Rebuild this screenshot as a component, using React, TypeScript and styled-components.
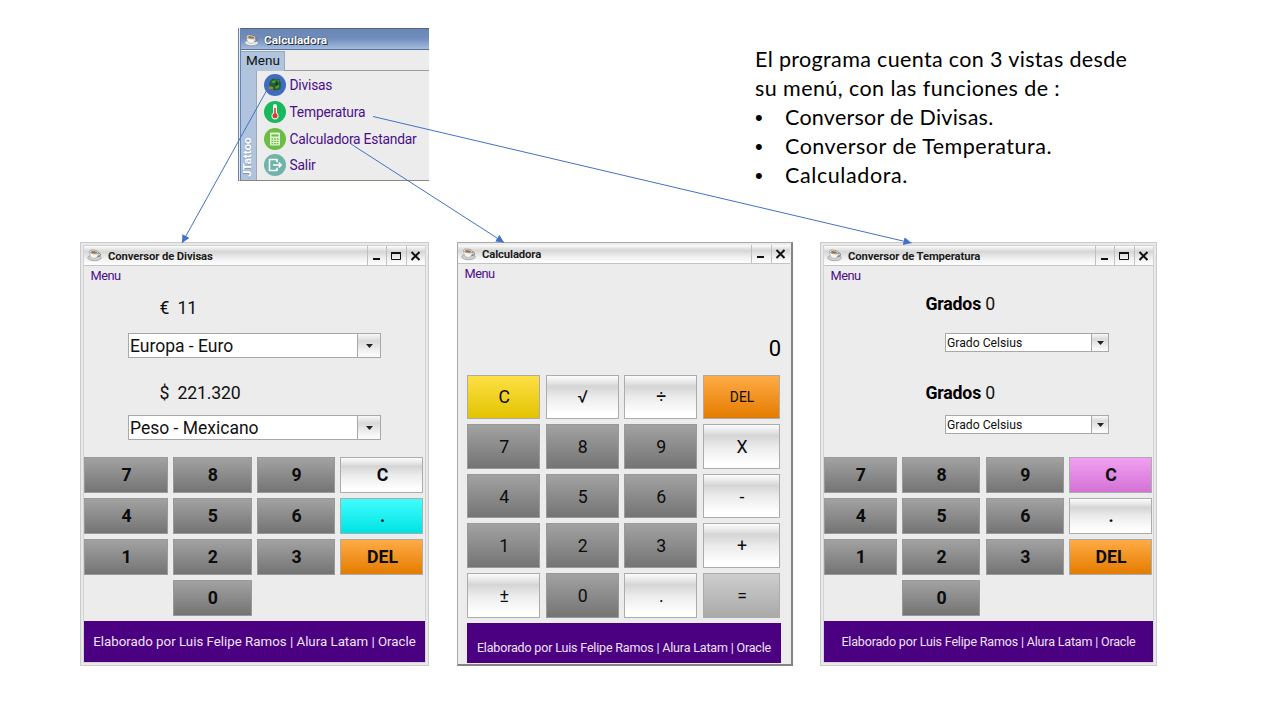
import React from 'react';
import styled, { createGlobalStyle, css } from 'styled-components';

const Global = createGlobalStyle`
  body { margin: 0; background: #fff; }
  * { box-sizing: border-box; }
`;

const Slide = styled.main`
  position: relative;
  width: 1280px;
  height: 720px;
  overflow: hidden;
  background: #fff;
  color: #111;
  font-family: Roboto, "Liberation Sans", sans-serif;
  white-space: nowrap;
`;

const TopRow = styled.section`
  display: flex;
  align-items: flex-start;
  height: 242px;
  padding: 28px 0 0 238px;
`;

const MenuShot = styled.div`
  width: 191px;
  height: 153px;
  background: #ececec;
  border-left: 3px double #6784b2;
  border-bottom: 1px solid #8a8a78;
  overflow: hidden;
`;

const BlueTitle = styled.header`
  display: flex;
  align-items: center;
  gap: 5px;
  height: 22px;
  margin-left: -3px;
  padding: 2px 0 0 6px;
  border-top: 1px solid #4d6185;
  border-bottom: 1px solid #5b7199;
  background: linear-gradient(#6b86b3, #6f8cbc 45%, #a3bbdd);
  color: #fff;
  font-size: 11.8px;
  font-weight: 700;
  text-shadow: 1px 1px 0 #222c40, 0 0 1px #222c40;
`;

const MenuBar = styled.div`
  height: 21px;
  padding-top: 1px;
  border-bottom: 1px solid #9d9d9d;
`;

const MenuTab = styled.div`
  width: 44px;
  height: 20px;
  padding-left: 5px;
  border-right: 1px solid #9aa9bd;
  border-top: 1px solid #9aa9bd;
  background: #b0c4de;
  font-size: 13.5px;
  line-height: 17px;
`;

const MenuBody = styled.div`
  display: flex;
  height: 109px;
`;

const Brand = styled.div`
  width: 16px;
  height: 109px;
  flex: none;
  padding-top: 3px;
  border-left: 1px solid #9aa9bd;
  background: #b0c4de;
  color: #fff;
  font-size: 11.5px;
  font-weight: 700;
  line-height: 13px;
  writing-mode: vertical-rl;
  transform: rotate(180deg);
  text-shadow: -1px 0 1px #8295b2;
`;

const MenuList = styled.ul`
  margin: 0;
  padding: 1px 0 0 6.5px;
  list-style: none;
`;

const MenuItem = styled.li`
  display: flex;
  align-items: center;
  gap: 4px;
  height: 26.7px;
  color: #4b0f8b;
  font-size: 13.8px;
  letter-spacing: -0.2px;
`;

const Notes = styled.div`
  margin: 17px 0 0 326px;
  color: #000;
  font-family: Lato, "Liberation Sans", sans-serif;
  font-size: 21.5px;
  line-height: 29px;
`;

const NoteLine = styled.div<{ $track?: number }>`
  height: 29px;
  letter-spacing: ${p => p.$track ?? 0}px;
`;

const Bullet = styled.span`
  display: inline-block;
  width: 30px;
  font-family: "Liberation Sans", sans-serif;
  font-size: 22px;
  letter-spacing: 0;
`;

const WindowRow = styled.section`
  display: flex;
  align-items: flex-start;
  padding-left: 80px;
`;

const Frame = styled.article<{ $w: number; $ml?: number; $sharp?: boolean }>`
  display: flex;
  flex-direction: column;
  width: ${p => p.$w}px;
  height: 424px;
  margin-left: ${p => p.$ml ?? 0}px;
  background: #ececec;
  border: 1px solid #cbcbcb;
  ${p => p.$sharp
    ? css`
        padding: 2px 1px 0 0;
        border-color: #a9a9a9 #848484 #848484 #a9a9a9;
        border-width: 1px 2px 2px 1px;
      `
    : css`
        padding: 3px 3px 3px 3px;
        box-shadow: inset 0 0 0 2px #e9e9e9, inset 0 0 0 3px #d3d3d3;
      `}
`;

const TitleBar = styled.header<{ $h: number }>`
  display: flex;
  flex: none;
  align-items: center;
  height: ${p => p.$h}px;
  padding-left: 3px;
  border-bottom: 1px solid #c4c4c4;
  background: linear-gradient(#fdfdfd 0%, #e4e4e4 18%, #d6d6d6 30%, #efefef 65%, #fff 100%);
`;

const Title = styled.span`
  flex: 1;
  padding: 1px 0 0 6px;
  color: #1c1c1c;
  font-size: 11.3px;
  font-weight: 700;
  letter-spacing: -0.12px;
`;

const WinButton = styled.span`
  display: flex;
  align-items: center;
  justify-content: center;
  width: 19.4px;
  height: 100%;
  border-left: 1px solid #c0c0c0;
`;

const MenuLabel = styled.nav`
  height: 20px;
  padding-left: 6.5px;
  color: #4b0f8b;
  font-size: 12.8px;
  letter-spacing: -0.5px;
  line-height: 20px;
`;

const Converter = styled.div`
  height: 171px;
`;

const Value = styled.div<{ $top: number; $left: number }>`
  height: 22px;
  margin: ${p => p.$top}px 0 0 ${p => p.$left}px;
  font-size: 17.7px;
  letter-spacing: -0.2px;
  line-height: 22px;
  white-space: pre;
  b { color: #000; }
`;

const Select = styled.div<{ $w: number; $h: number; $top: number; $left: number; $size: number }>`
  display: flex;
  width: ${p => p.$w}px;
  height: ${p => p.$h}px;
  margin: ${p => p.$top}px 0 0 ${p => p.$left}px;
  border: 1px solid #a8a8a8;
  background: #fff;
  font-size: ${p => p.$size}px;
  line-height: ${p => p.$h - 2}px;
`;

const SelectText = styled.span`
  flex: 1;
  height: 100%;
  padding: 1px 0 0 1px;
`;

const SelectArrow = styled.span<{ $w: number }>`
  display: flex;
  align-items: center;
  justify-content: center;
  width: ${p => p.$w}px;
  height: 100%;
  border-left: 1px solid #a8a8a8;
  background: linear-gradient(#f8f8f8, #dadada 30%, #fafafa 90%);
`;

const KeyGrid = styled.div<{ $cols: string; $row: number; $gap: number; $n: number }>`
  display: grid;
  grid-template-columns: ${p => p.$cols};
  grid-template-rows: repeat(${p => p.$n}, ${p => p.$row}px);
  row-gap: ${p => p.$gap}px;
  column-gap: 5.3px;
`;

type Tone = 'gray' | 'white' | 'cyan' | 'orange' | 'pink' | 'yellow' | 'silver';

const tones: Record<Tone, string> = {
  gray: 'linear-gradient(#a2a2a2, #747474)',
  white: 'linear-gradient(#fcfcfc 0%, #e6e6e6 15%, #d5d5d5 25%, #ebebeb 50%, #fff 90%)',
  cyan: 'linear-gradient(#41fdfd, #00e3e3)',
  orange: 'linear-gradient(#ffab45, #e47c00)',
  pink: 'linear-gradient(#f1a0f1, #d372d5)',
  yellow: 'linear-gradient(#fee045, #e3c300)',
  silver: 'linear-gradient(#cecece, #a9a9a9)',
};

const Key = styled.button<{ $tone: Tone; $bold?: boolean; $size?: number; $col?: number }>`
  padding: 1px 0 0 1px;
  border: 1px solid ${p => (p.$tone === 'gray' ? '#999' : '#acacac')};
  background: ${p => tones[p.$tone]};
  color: #0c0c0c;
  font-family: inherit;
  font-size: ${p => p.$size ?? 17.7}px;
  font-weight: ${p => (p.$bold ? 700 : 400)};
  ${p => p.$col && css`grid-column: ${p.$col};`}
`;

const Display = styled.div`
  height: 90.6px;
  padding: 54px 9px 0 0;
  color: #000;
  font-size: 22px;
  line-height: 22px;
  text-align: right;
`;

const CalcKeys = styled.div`
  padding: 0 9px;
`;

const Footer = styled.footer<{ $h: number; $size: number; $top: number; $pt?: number; $track?: number }>`
  display: flex;
  flex: none;
  align-items: center;
  justify-content: center;
  height: ${p => p.$h}px;
  margin-top: ${p => p.$top}px;
  padding-top: ${p => p.$pt ?? 0}px;
  background: #4b0082;
  color: #eee4f6;
  font-size: ${p => p.$size}px;
  letter-spacing: ${p => p.$track ?? 0}px;
`;

const Connectors = styled.svg`
  position: absolute;
  inset: 0;
  pointer-events: none;
`;

const Cup = ({ dark }: { dark?: boolean }) => (
  <svg width="15" height="13" viewBox="0 0 15 13">
    <ellipse cx="7.500" cy="8.800" rx="6.800" ry="2.900" fill={dark ? '#e9e9e9' : '#d0d0d0'} stroke="#8a8a8a" strokeWidth=".6" />
    <path d="M2.800 2.800c-.3 3.500 1.200 6.400 4 6.600 2.900.1 4.600-2.500 4.700-5.600z" fill="#f5f5f5" stroke="#999" strokeWidth=".5" />
    <path d="M11 4c3.600-.2 3.200 3.600-.6 3.800" fill="none" stroke="#6b6b6b" strokeWidth=".9" />
    <ellipse cx="7" cy="3" rx="4.500" ry="1.800" transform="rotate(8 7 3)" fill="#eee" stroke="#777" strokeWidth=".6" />
    <ellipse cx="7.200" cy="3.300" rx="3.200" ry="1.100" transform="rotate(8 7 3)" fill="#a4703f" />
  </svg>
);

const Minimize = () => (
  <svg width="12" height="12"><path d="M2 9h7" stroke="#111" strokeWidth="2" /></svg>
);
const Maximize = () => (
  <svg width="12" height="12"><path d="M1.500 2.500h9v7h-9z" fill="none" stroke="#111" /><path d="M1 3h10" stroke="#111" strokeWidth="2" /></svg>
);
const Close = () => (
  <svg width="12" height="12"><path d="M1.500 2l8 8M9.500 2l-8 8" stroke="#111" strokeWidth="2" /></svg>
);
const Caret = () => (
  <svg width="7" height="4"><path d="M0 0h7L3.500 4z" fill="#222" /></svg>
);

const CurrencyIcon = () => (
  <svg width="22" height="22" viewBox="0 0 22 22">
    <circle cx="11" cy="11" r="11" fill="#406cc0" />
    <path d="M5.500 8l3-3.500 3 1 4-.5 1.500 5-.5 5-4 1.500-5-.5-2.500-3z" fill="#235f2d" />
    <path d="M7 8l3-2 2 1-2 2.500zM11 13l4-2.500v3l-3 1.500zM13 6l2.500.5-1 2z" fill="#4b9b45" />
    <path d="M5 12l4 1v2.800l-4-.8z" fill="#98872d" />
    <circle cx="12.500" cy="10" r="1.400" fill="#17381d" />
  </svg>
);
const ThermoIcon = () => (
  <svg width="22" height="22" viewBox="0 0 22 22">
    <circle cx="11" cy="11" r="11" fill="#18b85c" />
    <path d="M9 5a2 2 0 014 0V12a3.600 3.600 0 11-4 0z" fill="#f1f1ee" />
    <path d="M11 7v7" stroke="#d93a35" strokeWidth="1.600" />
    <circle cx="11" cy="14.800" r="2.500" fill="#d93a35" />
  </svg>
);
const CalcIcon = () => (
  <svg width="22" height="22" viewBox="0 0 22 22">
    <circle cx="11" cy="11" r="11" fill="#6cbd45" />
    <rect x="6" y="4.500" width="10" height="13" rx="1" fill="#e3f2d2" />
    <path d="M7.500 6.500h7v2h-7z" fill="#6cbd45" />
    <path d="M7.500 11h7M7.500 13.300h7M7.500 15.600h7" stroke="#6cbd45" strokeWidth="1.300" strokeDasharray="1.700 .95" />
  </svg>
);
const ExitIcon = () => (
  <svg width="22" height="22" viewBox="0 0 22 22">
    <circle cx="11" cy="11" r="11" fill="#6fb3ab" />
    <path d="M13 8.200V5.500H5.500v11H13v-2.700" fill="none" stroke="#fff" strokeWidth="1.600" strokeLinejoin="round" />
    <path d="M9 11h8M14.700 8.500l2.500 2.500-2.500 2.500" fill="none" stroke="#fff" strokeWidth="1.600" />
  </svg>
);

const menuItems = [
  { label: 'Divisas', Icon: CurrencyIcon },
  { label: 'Temperatura', Icon: ThermoIcon },
  { label: 'Calculadora Estandar', Icon: CalcIcon },
  { label: 'Salir', Icon: ExitIcon },
];

const credit = 'Elaborado por Luis Felipe Ramos | Alura Latam | Oracle';

type KeySpec = [string, Tone, number?];

const WindowTitle = ({ text, h, max }: { text: string; h: number; max?: boolean }) => (
  <TitleBar $h={h}>
    <Cup />
    <Title>{text}</Title>
    <WinButton><Minimize /></WinButton>
    {max && <WinButton><Maximize /></WinButton>}
    <WinButton><Close /></WinButton>
  </TitleBar>
);

const NumPad = ({ cols, clear, dot }: { cols: string; clear: Tone; dot: Tone }) => {
  const keys: [string, Tone][] = [
    ['7', 'gray'], ['8', 'gray'], ['9', 'gray'], ['C', clear],
    ['4', 'gray'], ['5', 'gray'], ['6', 'gray'], ['.', dot],
    ['1', 'gray'], ['2', 'gray'], ['3', 'gray'], ['DEL', 'orange'],
  ];
  return (
    <KeyGrid $cols={cols} $row={35.6} $gap={5.4} $n={4}>
      {keys.map(([label, tone]) => <Key key={label} $tone={tone} $bold>{label}</Key>)}
      <Key $tone="gray" $bold $col={2}>0</Key>
    </KeyGrid>
  );
};

const calcKeys: KeySpec[] = [
  ['C', 'yellow'], ['√', 'white'], ['÷', 'white'], ['DEL', 'orange', 13.8],
  ['7', 'gray'], ['8', 'gray'], ['9', 'gray'], ['X', 'white'],
  ['4', 'gray'], ['5', 'gray'], ['6', 'gray'], ['-', 'white'],
  ['1', 'gray'], ['2', 'gray'], ['3', 'gray'], ['+', 'white'],
  ['±', 'white'], ['0', 'gray'], ['.', 'white'], ['=', 'silver'],
];

export default function App() {
  return (
    <Slide>
      <Global />
      <TopRow>
        <MenuShot>
          <BlueTitle><Cup dark />Calculadora</BlueTitle>
          <MenuBar><MenuTab>Menu</MenuTab></MenuBar>
          <MenuBody>
            <Brand>JTattoo</Brand>
            <MenuList>
              {menuItems.map(({ label, Icon }) => (
                <MenuItem key={label}><Icon />{label}</MenuItem>
              ))}
            </MenuList>
          </MenuBody>
        </MenuShot>
        <Notes>
          <NoteLine $track={0.35}>El programa cuenta con 3 vistas desde</NoteLine>
          <NoteLine $track={0.42}>su menú, con las funciones de :</NoteLine>
          <NoteLine $track={0.25}><Bullet>•</Bullet>Conversor de Divisas.</NoteLine>
          <NoteLine $track={0.5}><Bullet>•</Bullet>Conversor de Temperatura.</NoteLine>
          <NoteLine $track={0.6}><Bullet>•</Bullet>Calculadora.</NoteLine>
        </Notes>
      </TopRow>

      <WindowRow>
        <Frame $w={349}>
          <WindowTitle text="Conversor de Divisas" h={20} max />
          <MenuLabel>Menu</MenuLabel>
          <Converter>
            <Value $top={11} $left={75.5}>€  11</Value>
            <Select $w={253} $h={25} $top={14} $left={44} $size={17.5}>
              <SelectText>Europa - Euro</SelectText>
              <SelectArrow $w={23}><Caret /></SelectArrow>
            </Select>
            <Value $top={24} $left={75.5}>$  221.320</Value>
            <Select $w={253} $h={25} $top={11} $left={44} $size={17.5}>
              <SelectText>Peso - Mexicano</SelectText>
              <SelectArrow $w={23}><Caret /></SelectArrow>
            </Select>
          </Converter>
          <NumPad cols="84px 78.3px 78.3px 83px" clear="white" dot="cyan" />
          <Footer $h={41} $size={13.3} $top={5.4}>{credit}</Footer>
        </Frame>

        <Frame $w={336} $ml={28} $sharp>
          <WindowTitle text="Calculadora" h={19} />
          <MenuLabel>Menu</MenuLabel>
          <Display>0</Display>
          <CalcKeys>
            <KeyGrid $cols="73.3px 73.3px 73.3px 77.5px" $row={44.6} $gap={5} $n={5}>
              {calcKeys.map(([label, tone, size]) => (
                <Key key={label} $tone={tone} $size={size}>{label}</Key>
              ))}
            </KeyGrid>
            <Footer $h={40} $size={12.5} $top={5.4} $pt={9} $track={-0.17}>{credit}</Footer>
          </CalcKeys>
        </Frame>

        <Frame $w={337} $ml={27}>
          <WindowTitle text="Conversor de Temperatura" h={20} max />
          <MenuLabel>Menu</MenuLabel>
          <Converter>
            <Value $top={7} $left={101.5}><b>Grados</b> 0</Value>
            <Select $w={164} $h={19} $top={18} $left={121} $size={12.2}>
              <SelectText>Grado Celsius</SelectText>
              <SelectArrow $w={17}><Caret /></SelectArrow>
            </Select>
            <Value $top={30} $left={101.5}><b>Grados</b> 0</Value>
            <Select $w={164} $h={19} $top={11} $left={121} $size={12.2}>
              <SelectText>Grado Celsius</SelectText>
              <SelectArrow $w={17}><Caret /></SelectArrow>
            </Select>
          </Converter>
          <NumPad cols="72.7px 78.3px 78.3px 82.7px" clear="pink" dot="white" />
          <Footer $h={41} $size={12.5} $top={5.4} $track={-0.17}>{credit}</Footer>
        </Frame>
      </WindowRow>

      <Connectors width="1280" height="720" viewBox="0 0 1280 720">
        <defs>
          <marker id="tip" markerWidth="9" markerHeight="9" refX="8" refY="4" orient="auto" markerUnits="userSpaceOnUse">
            <path d="M0 0L8 4L0 8z" fill="#4472c4" />
          </marker>
        </defs>
        <g stroke="#4472c4" strokeWidth="1">
          <line x1="268" y1="88" x2="182" y2="243" markerEnd="url(#tip)" />
          <line x1="351" y1="144" x2="504" y2="242.500" markerEnd="url(#tip)" />
          <line x1="373" y1="116.500" x2="911.500" y2="243" markerEnd="url(#tip)" />
        </g>
      </Connectors>
    </Slide>
  );
}
